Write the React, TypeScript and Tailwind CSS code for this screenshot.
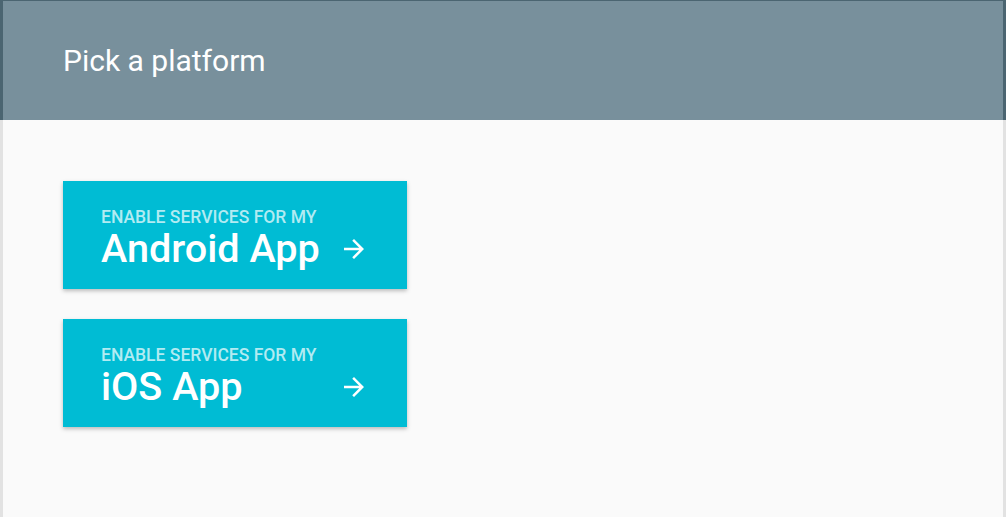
import React from "react";
import { MdArrowForward } from "react-icons/md";

function PlatformCard({ name }: { name: string }) {
  return (
    <button className="flex w-[344px] h-[108px] flex-col items-start bg-[#00bcd4] pl-[38px] pr-[38px] pt-[27px] text-left shadow-[0_2px_4px_rgba(0,0,0,0.25)]">
      <span className="text-[17.5px] leading-[19px] font-medium text-[#b2ebf2]">
        ENABLE SERVICES FOR MY
      </span>
      <span className="flex w-full items-center justify-between">
        <span className="text-[39.6px] leading-[43px] font-medium text-white">{name}</span>
        <MdArrowForward className="text-white" size={30} />
      </span>
    </button>
  );
}

export default function App() {
  return (
    <div
      className="flex h-[517px] w-[1006px] flex-col"
      style={{ fontFamily: "Roboto, 'Noto Sans', sans-serif" }}
    >
      <header className="flex h-[120px] items-center border-x-[3px] border-t border-[#4b6571] bg-[#78909c] pl-[60px]">
        <h1 className="text-[30px] text-white">Pick a platform</h1>
      </header>
      <main className="flex flex-1 flex-col gap-[30px] border-x-[3px] border-[#e2e2e2] bg-[#fafafa] pl-[60px] pt-[61px]">
        <PlatformCard name="Android App" />
        <PlatformCard name="iOS App" />
      </main>
    </div>
  );
}
